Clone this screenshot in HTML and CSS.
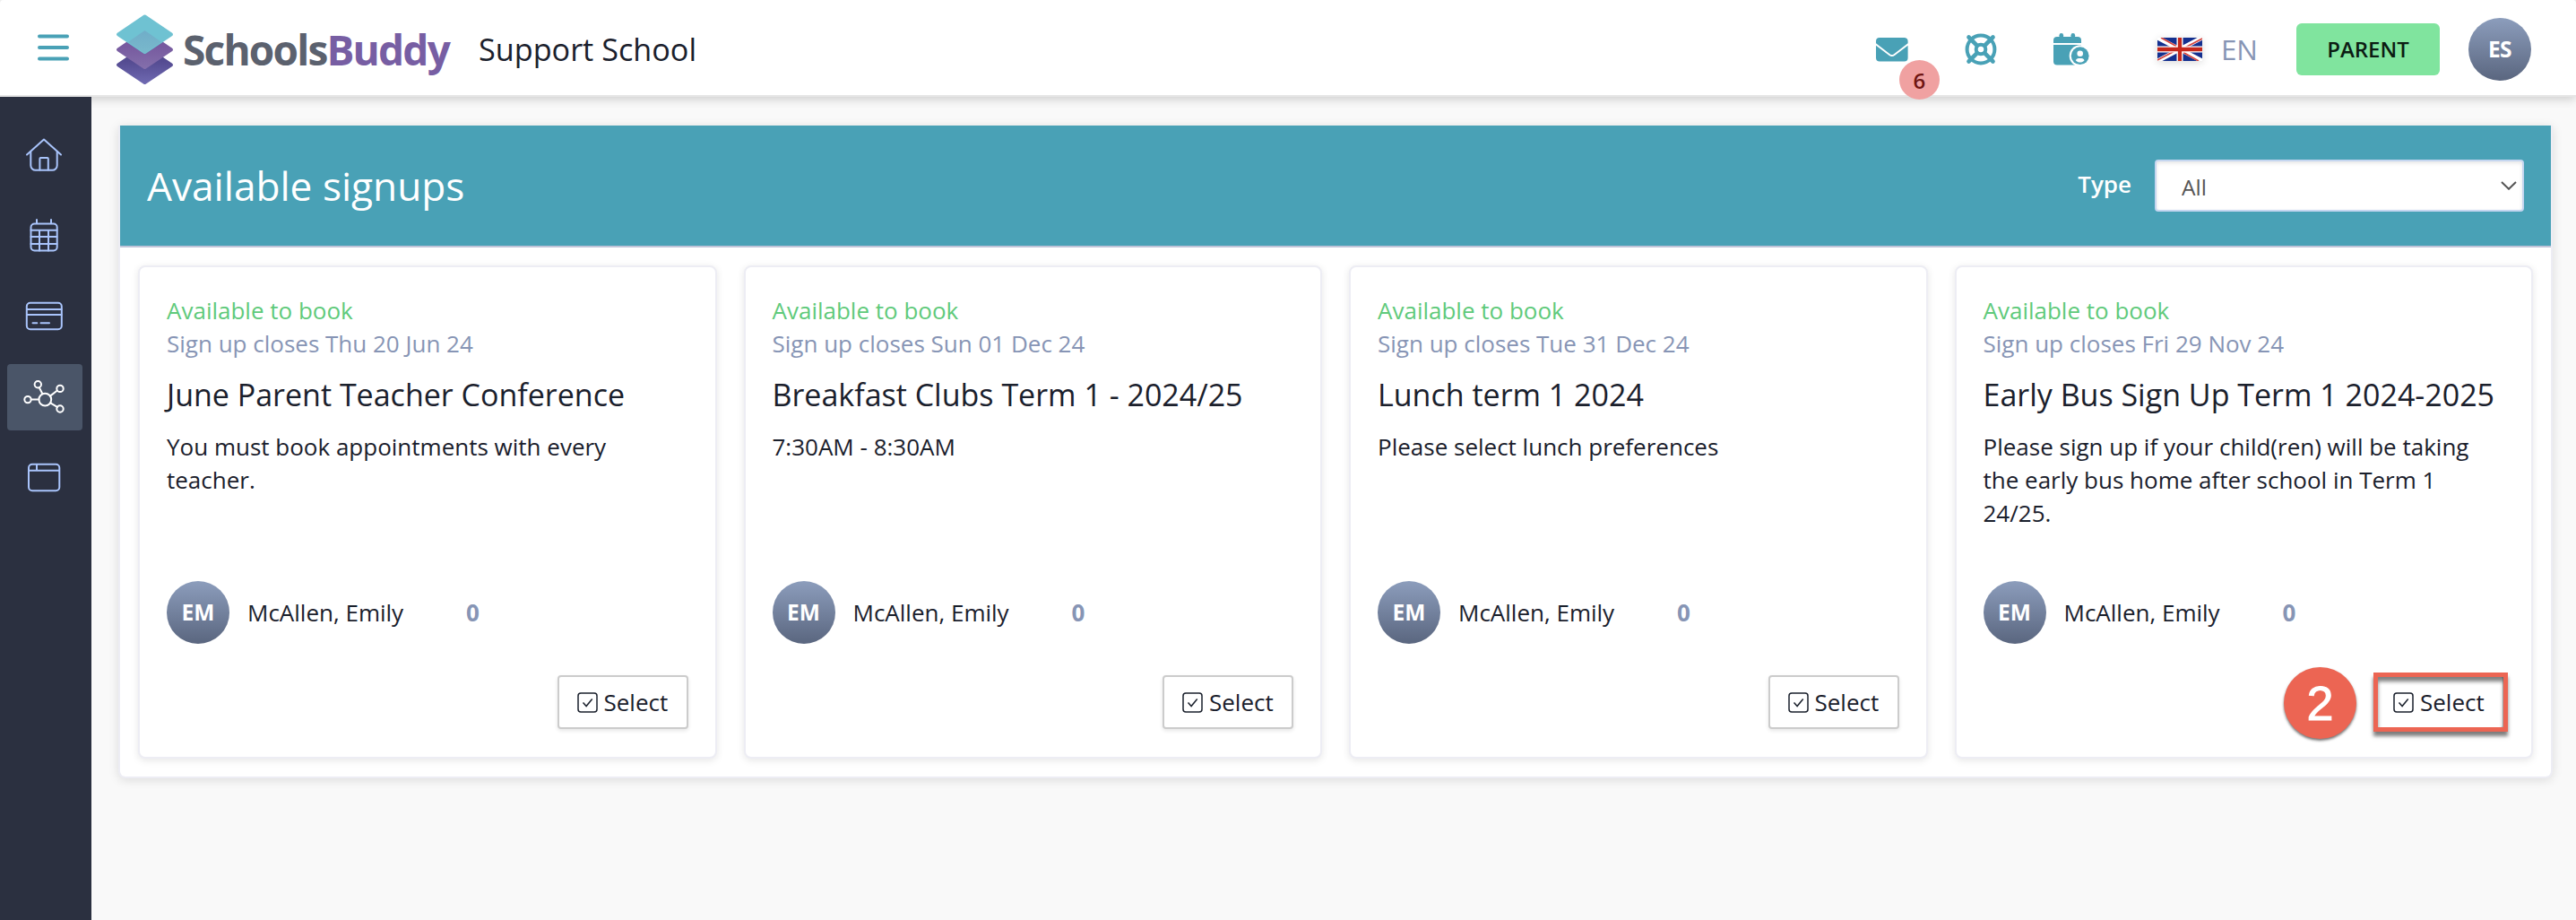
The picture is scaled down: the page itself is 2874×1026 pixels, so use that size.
FILE: index.html
```
<!DOCTYPE html>
<html lang="en">

<head>
    <meta charset="UTF-8">
    <meta name="viewport" content="width=device-width, initial-scale=1.0">
    <title>SchoolsBuddy - Available signups</title>
    <link rel="stylesheet" href="styles.css">
</head>

<body>
    <!-- Shared icons -->
    <svg class="icon-defs" width="0" height="0">
        <symbol id="icon-check" viewBox="0 0 23 23">
            <rect x="1" y="1" width="21" height="21" rx="3" />
            <path d="M6.5 11.5l3.6 4 6.6-8" />
        </symbol>
    </svg>

    <header class="topbar">
        <svg class="menu-icon" width="35" height="30" viewBox="0 0 35 30">
            <path d="M2 2.5h31M2 15h31M2 27.5h31" />
        </svg>
        <div class="logo">
            <svg width="65" height="79" viewBox="0 0 65 79">
                <defs>
                    <linearGradient id="layer-bottom" x1="0" y1="0" x2="0" y2="1">
                        <stop offset="0.4" stop-color="#544b91" />
                        <stop offset="1" stop-color="#6e68b0" />
                    </linearGradient>
                    <linearGradient id="layer-middle" x1="0" y1="0" x2="0" y2="1">
                        <stop offset="0.4" stop-color="#775a9f" />
                        <stop offset="1" stop-color="#836eab" />
                    </linearGradient>
                    <linearGradient id="layer-overlap" x1="0" y1="0" x2="0" y2="1">
                        <stop offset="0" stop-color="#70adc8" />
                        <stop offset="1" stop-color="#79b9cc" />
                    </linearGradient>
                </defs>
                <path d="M32.5 36.5L62 56.3 32.5 76 3 56.3z" fill="url(#layer-bottom)" stroke="url(#layer-bottom)" stroke-width="4" stroke-linejoin="round" />
                <path d="M32.5 19.5L62 39.3 32.5 59 3 39.3z" fill="url(#layer-middle)" stroke="url(#layer-middle)" stroke-width="4" stroke-linejoin="round" />
                <path d="M32.5 2.5L62 22.3 32.5 42 3 22.3z" fill="#6fc2d2" stroke="#6fc2d2" stroke-width="4" stroke-linejoin="round" />
                <path d="M32.5 18L51 30.8 32.5 43.5 14 30.8z" fill="url(#layer-overlap)" />
            </svg>
            <span class="logo-text">Schools<span class="logo-accent">Buddy</span></span>
        </div>
        <span class="school-name">Support School</span>

        <div class="topbar-actions">
            <div class="messages">
                <svg width="36" height="27" viewBox="0 0 36 27">
                    <path d="M4 0h28a4 4 0 0 1 3.6 4v2.3L20 18.2a3.5 3.5 0 0 1-4.4 0L0 6.300V4a4 4 0 0 1 4-4z" />
                    <path d="M0 8.800l14.500 11a5.500 5.500 0 0 0 6.600 0L35.600 8.800V22.500a4 4 0 0 1-4 4H4a4 4 0 0 1-4-4z" />
                </svg>
                <span class="badge">6</span>
            </div>
            <svg class="help-icon" width="36" height="36" viewBox="0 0 36 36">
                <circle cx="18" cy="18" r="15.400" stroke-width="4" />
                <circle cx="18" cy="18" r="5.300" stroke-width="4" />
                <path d="M4.500 4.500l9.300 9.300M31.500 4.500l-9.300 9.300M4.500 31.500l9.300-9.300M31.500 31.500l-9.300-9.300" stroke-width="4.600" />
            </svg>
            <svg class="booking-icon" width="40" height="36" viewBox="0 0 40 36">
                <path d="M4 4h23a4 4 0 0 1 4 4v3H0V8a4 4 0 0 1 4-4z" />
                <path d="M0 13h31v22.500H4a4 4 0 0 1-4-4z" />
                <rect x="6.500" y="0" width="4.600" height="8" rx="2.300" />
                <rect x="19.500" y="0" width="4.600" height="8" rx="2.300" />
                <circle class="cutout" cx="29.700" cy="25.200" r="12" />
                <circle cx="29.700" cy="25.200" r="9.900" />
                <circle class="cutout" cx="29.700" cy="22.700" r="3.300" />
                <path class="cutout" d="M24.800 30.200c1-2 3-2.200 4.900-2.200s3.900.2 4.900 2.200c-1.300 1.700-3 2.300-4.900 2.300s-3.600-.6-4.900-2.300z" />
            </svg>
            <svg class="flag" width="50" height="26" viewBox="0 0 50 26">
                <rect width="50" height="26" fill="#14308f" />
                <path d="M0 0l50 26M50 0L0 26" stroke="#fff" stroke-width="5" />
                <path d="M4 0l17 9.500M50 1L29 12M46 26l-17-9.500M0 25l21-11" stroke="#d5453f" stroke-width="1.700" />
                <path d="M25 0v26M0 13h50" stroke="#fff" stroke-width="7" />
                <path d="M25 0v26M0 13h50" stroke="#c5281c" stroke-width="4.300" />
            </svg>
            <span class="language">EN</span>
            <span class="role">PARENT</span>
            <span class="avatar">ES</span>
        </div>
    </header>

    <div class="layout">
        <nav class="sidebar">
            <a class="nav-item">
                <svg width="50" height="50" viewBox="0 0 50 50">
                    <path d="M5 24.500L24 7.500l19 17" />
                    <path d="M9.300 21v15.500a5.300 5.300 0 0 0 5.300 5.300h18.800a5.300 5.300 0 0 0 5.300-5.300V21" />
                    <path d="M19.400 41.500V29a1 1 0 0 1 1-1h7.400a1 1 0 0 1 1 1v12.500" />
                </svg>
            </a>
            <a class="nav-item">
                <svg width="50" height="50" viewBox="0 0 50 50">
                    <rect x="9.500" y="11.500" width="29.200" height="30" rx="4" />
                    <path d="M16 7v4M32 7v4M9.500 18.800h29M9.500 26h29M9.500 34h29M19 19v22.500M29 19v22.500" />
                </svg>
            </a>
            <a class="nav-item">
                <svg width="50" height="50" viewBox="0 0 50 50">
                    <rect x="4.800" y="9.800" width="39" height="29.400" rx="4" />
                    <path d="M5 17h38.500M5 23h38.500M11.500 32.300h4.800M20.500 32.300h9.500" />
                </svg>
            </a>
            <a class="nav-item active">
                <svg width="50" height="50" viewBox="0 0 50 50">
                    <circle cx="25.300" cy="27.600" r="6.900" />
                    <circle cx="6" cy="27.600" r="3.700" />
                    <circle cx="17.300" cy="10.800" r="3.700" />
                    <circle cx="42" cy="15.400" r="3.700" />
                    <circle cx="42" cy="38" r="3.700" />
                    <path d="M9.700 27.600h8.700M18.800 14.200l3.600 7M38.900 17.500l-7.900 6.100M38.900 35.900l-7.700-4.600" />
                </svg>
            </a>
            <a class="nav-item">
                <svg width="50" height="50" viewBox="0 0 50 50">
                    <rect x="7" y="9.800" width="34.300" height="29.400" rx="4" />
                    <path d="M7 16.800h34M16 10v6.500" />
                </svg>
            </a>
        </nav>

        <main class="content">
            <section class="panel">
                <div class="panel-header">
                    <h1>Available signups</h1>
                    <div class="filter">
                        <label for="type">Type</label>
                        <div class="select-wrap">
                            <select id="type">
                                <option>All</option>
                            </select>
                            <svg width="18" height="10" viewBox="0 0 18 10">
                                <path d="M1 1l8 7.800L17 1" />
                            </svg>
                        </div>
                    </div>
                </div>

                <div class="cards">
                    <article class="card">
                        <div class="status">Available to book</div>
                        <div class="closes">Sign up closes Thu 20 Jun 24</div>
                        <h2>June Parent Teacher Conference</h2>
                        <p>You must book appointments with every teacher.</p>
                        <div class="person">
                            <span class="avatar">EM</span>
                            <span class="name">McAllen, Emily</span>
                            <span class="count">0</span>
                        </div>
                        <div class="card-actions">
                            <button class="select-btn"><svg width="23" height="23"><use href="#icon-check" /></svg>Select</button>
                        </div>
                    </article>

                    <article class="card">
                        <div class="status">Available to book</div>
                        <div class="closes">Sign up closes Sun 01 Dec 24</div>
                        <h2>Breakfast Clubs Term 1 - 2024/25</h2>
                        <p>7:30AM - 8:30AM</p>
                        <div class="person">
                            <span class="avatar">EM</span>
                            <span class="name">McAllen, Emily</span>
                            <span class="count">0</span>
                        </div>
                        <div class="card-actions">
                            <button class="select-btn"><svg width="23" height="23"><use href="#icon-check" /></svg>Select</button>
                        </div>
                    </article>

                    <article class="card">
                        <div class="status">Available to book</div>
                        <div class="closes">Sign up closes Tue 31 Dec 24</div>
                        <h2>Lunch term 1 2024</h2>
                        <p>Please select lunch preferences</p>
                        <div class="person">
                            <span class="avatar">EM</span>
                            <span class="name">McAllen, Emily</span>
                            <span class="count">0</span>
                        </div>
                        <div class="card-actions">
                            <button class="select-btn"><svg width="23" height="23"><use href="#icon-check" /></svg>Select</button>
                        </div>
                    </article>

                    <article class="card">
                        <div class="status">Available to book</div>
                        <div class="closes">Sign up closes Fri 29 Nov 24</div>
                        <h2>Early Bus Sign Up Term 1 2024-2025</h2>
                        <p>Please sign up if your child(ren) will be taking the early bus home after school in Term 1 24/25.</p>
                        <div class="person">
                            <span class="avatar">EM</span>
                            <span class="name">McAllen, Emily</span>
                            <span class="count">0</span>
                        </div>
                        <div class="card-actions">
                            <div class="step">
                                <button class="select-btn"><svg width="23" height="23"><use href="#icon-check" /></svg>Select</button>
                                <span class="step-outline"></span>
                                <span class="step-number">2</span>
                            </div>
                        </div>
                    </article>
                </div>
            </section>
        </main>
    </div>
</body>

</html>
```
FILE: styles.css
```
* {
    box-sizing: border-box;
}

body {
    margin: 0;
    min-height: 100vh;
    display: flex;
    flex-direction: column;
    background-color: #f9f9f9;
    color: #1a202c;
    font-family: "Open Sans", "Noto Sans", sans-serif;
    font-size: 26px;
    line-height: 37px;
}

svg {
    display: block;
    flex: none;
}

.icon-defs {
    position: absolute;
}

/* Top bar */
.topbar {
    display: flex;
    align-items: center;
    height: 108px;
    padding: 4px 50px 0 42px;
    background-color: #fff;
    border-bottom: 2px solid #e6e6e6;
    border-radius: 4px 4px 0 0;
    box-shadow: 0 2px 12px rgba(0, 0, 0, 0.2);
}

.menu-icon {
    margin-bottom: 5px;
    fill: none;
    stroke: #49a1b6;
    stroke-width: 4;
    stroke-linecap: round;
}

.logo {
    display: flex;
    align-items: center;
    margin-left: 52px;
}

.logo-text {
    margin-left: 10px;
    color: #5b616e;
    font-size: 46px;
    font-weight: 700;
    letter-spacing: -1.8px;
}

.logo-accent {
    color: #775ea3;
}

.school-name {
    margin-left: 33px;
    padding-bottom: 2px;
    font-size: 34.2px;
}

.topbar-actions {
    display: flex;
    align-items: center;
    margin-left: auto;
}

.messages {
    position: relative;
    fill: #49a1b6;
}

.badge {
    position: absolute;
    top: 25px;
    left: 26px;
    width: 45px;
    height: 44px;
    border-radius: 50%;
    background-color: #f0a1a1;
    color: #6f1512;
    font-size: 24px;
    font-weight: 600;
    line-height: 45px;
    text-align: center;
}

.help-icon {
    margin-left: 63px;
    fill: none;
    stroke: #49a1b6;
    stroke-linecap: round;
}

.booking-icon {
    margin-left: 63px;
    fill: #49a1b6;
}

.cutout {
    fill: #fff;
}

.flag {
    margin-left: 76px;
    box-shadow: 0 2px 8px rgba(0, 0, 0, 0.15);
}

.language {
    margin-left: 21px;
    padding-bottom: 2px;
    color: #8795b5;
    font-size: 31.4px;
}

.role {
    width: 160px;
    height: 58px;
    margin-left: 43px;
    border-radius: 6px;
    background-color: #80e49e;
    color: #0c1c13;
    font-size: 24px;
    font-weight: 600;
    line-height: 58px;
    text-align: center;
}

.avatar {
    flex: none;
    width: 70px;
    height: 70px;
    border-radius: 50%;
    background: linear-gradient(#8c9dbc, #5a667f);
    color: #fff;
    font-size: 24.5px;
    font-weight: 700;
    line-height: 69px;
    text-align: center;
}

.topbar .avatar {
    margin-left: 32px;
    letter-spacing: -0.5px;
}

/* Page layout */
.layout {
    display: flex;
    flex: 1;
}

.sidebar {
    z-index: 1;
    display: flex;
    flex-direction: column;
    gap: 16px;
    width: 102px;
    padding: 28px 10px 0 8px;
    background-color: #2b3040;
}

.nav-item {
    display: flex;
    align-items: center;
    justify-content: center;
    height: 74px;
    border-radius: 4px;
    fill: none;
    stroke: #a9c4fb;
    stroke-width: 2;
    stroke-linecap: round;
    stroke-linejoin: round;
}

.nav-item.active {
    background-color: #4a5568;
    stroke: #fff;
}

.content {
    flex: 1;
    padding: 32px 26px 0 30px;
}

/* Signups panel */
.panel {
    background-color: #fff;
    border: 2px solid #ededf4;
    border-top: 0;
    border-radius: 0 0 8px 8px;
    box-shadow: 0 2px 12px rgba(0, 0, 0, 0.12);
}

.panel-header {
    display: flex;
    align-items: center;
    justify-content: space-between;
    height: 136px;
    padding: 0 30px;
    background-color: #49a1b6;
    border-bottom: 2px solid #c0c4d8;
    color: #fff;
}

h1 {
    margin: 0;
    font-size: 44.2px;
    font-weight: 400;
    line-height: 60px;
}

.filter {
    display: flex;
    align-items: center;
    gap: 26px;
}

.filter label {
    padding-bottom: 3px;
    font-weight: 600;
}

.select-wrap {
    position: relative;
}

.select-wrap select {
    display: block;
    width: 412px;
    height: 58px;
    padding: 3px 28px 0;
    appearance: none;
    background-color: #fff;
    border: 2px solid #c5d6f0;
    border-radius: 4px;
    box-shadow: inset 0 2px 4px rgba(0, 0, 0, 0.1);
    color: #555;
    font-family: inherit;
    font-size: 24.5px;
}

.select-wrap svg {
    position: absolute;
    top: 24px;
    right: 8px;
    fill: none;
    stroke: #555;
    stroke-width: 2;
}

.cards {
    display: grid;
    grid-template-columns: repeat(4, 1fr);
    gap: 30px;
    padding: 20px;
}

.card {
    height: 550px;
    padding: 30px 30px 0;
    background-color: #fff;
    border: 2px solid #ededf4;
    border-radius: 8px;
    box-shadow: 0 2px 8px rgba(0, 0, 0, 0.1);
}

.status {
    color: #5fca7b;
}

.closes {
    color: #8795b5;
}

.card h2 {
    margin: 14px 0 16px;
    font-size: 34px;
    font-weight: 400;
    line-height: 48px;
    white-space: nowrap;
}

.card p {
    height: 111px;
    margin: 0 0 57px;
    padding-right: 30px;
}

.person {
    display: flex;
    align-items: center;
}

.name {
    margin-left: 20px;
}

.count {
    margin-left: 70px;
    color: #8795b5;
    font-weight: 700;
}

.card-actions {
    display: flex;
    justify-content: flex-end;
    margin-top: 35px;
}

.select-btn {
    display: flex;
    align-items: center;
    gap: 7px;
    width: 146px;
    height: 60px;
    padding: 0 0 0 20px;
    background-color: #fff;
    border: 2px solid #ccc;
    border-radius: 4px;
    box-shadow: 0 2px 4px rgba(0, 0, 0, 0.1);
    color: #1a202c;
    font-family: inherit;
    font-size: 26px;
}

.select-btn svg {
    fill: none;
    stroke: #1a202c;
    stroke-width: 1.5;
}

/* Guide step drawn over the button */
.step {
    position: relative;
}

.step-outline {
    position: absolute;
    top: -3px;
    right: -4px;
    bottom: -3px;
    left: 0;
    border: 5px solid #ec6553;
    box-shadow: 0 5px 4px rgba(0, 0, 0, 0.5), inset 0 5px 4px rgba(0, 0, 0, 0.5);
}

.step-number {
    position: absolute;
    top: -9px;
    left: -100px;
    width: 81px;
    height: 80px;
    border-radius: 50%;
    background-color: #ec6553;
    box-shadow: 0 2px 3px rgba(0, 0, 0, 0.55);
    color: #fff;
    font-family: "Liberation Sans", Arial, sans-serif;
    font-size: 54px;
    line-height: 81px;
    text-align: center;
    -webkit-text-stroke: 1px #fff;
}
```
